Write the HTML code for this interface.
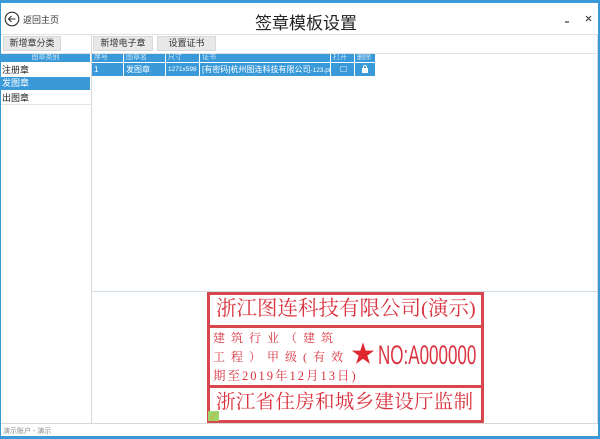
<!DOCTYPE html>
<html><head><meta charset="utf-8"><style>
*{margin:0;padding:0;box-sizing:border-box}
body{width:600px;height:439px;position:relative;background:#fff;font-family:"Liberation Sans","Noto Sans CJK SC",sans-serif;overflow:hidden;color:#222}
.a{position:absolute}
.btn{position:absolute;background:#e8e8e8;border:1px solid #d8d8d8;font-size:9px;text-align:center;line-height:13px;color:#333}
.th{position:absolute;top:54px;height:8px;background:#3a9ad9;color:#cfe6f7;font-size:7px;line-height:8px;padding-left:2px;border-right:1px solid #fff}
.td{position:absolute;top:63px;height:13px;background:#3a9ad9;color:#fff;font-size:8px;line-height:13px;padding-left:2px;border-right:1px solid #fff}
.r{color:#d9333f}
.serif{font-family:"Liberation Serif","Noto Serif CJK SC",serif}
</style></head><body>
<div class="a" style="left:0;top:0;width:600px;height:3px;background:#3a9ad9"></div>
<div class="a" style="left:0;top:0;width:1px;height:439px;background:#3a9ad9"></div>
<div class="a" style="right:0;top:0;width:2px;height:439px;background:#3a9ad9"></div>
<div class="a" style="left:0;top:436px;width:600px;height:3px;background:#3a9ad9"></div>
<svg class="a" style="left:4px;top:11px" width="16" height="16" viewBox="0 0 16 16"><circle cx="8" cy="8" r="6.8" fill="none" stroke="#333" stroke-width="1.1"/><path d="M11.5 8H4.5M7.5 5L4.5 8L7.5 11" fill="none" stroke="#333" stroke-width="1.1"/></svg>
<div class="a" style="left:23px;top:13px;font-size:9px;color:#333">返回主页</div>
<div class="a" style="left:255px;top:9px;font-size:17px;color:#222">签章模板设置</div>
<svg class="a" style="left:563px;top:14px" width="30" height="10"><path d="M2 8H6" stroke="#333" stroke-width="1.2"/><path d="M23 2L28 7M28 2L23 7" stroke="#333" stroke-width="1"/></svg>
<div class="a" style="left:1px;top:34px;width:597px;height:1px;background:#e2e2e2"></div>
<div class="a" style="left:1px;top:53px;width:597px;height:1px;background:#e2e2e2"></div>
<div class="btn" style="left:3px;top:36px;width:58px;height:15px">新增章分类</div>
<div class="btn" style="left:93px;top:36px;width:60px;height:15px">新增电子章</div>
<div class="btn" style="left:157px;top:36px;width:59px;height:15px">设置证书</div>
<div class="a" style="left:91px;top:34px;width:1px;height:390px;background:#d8d8d8"></div>
<div class="a" style="left:597px;top:34px;width:1px;height:390px;background:#d8d8d8"></div>
<div class="a" style="left:1px;top:54px;width:89px;height:8px;background:#3a9ad9;color:#cfe6f7;font-size:7px;line-height:8px;text-align:center">图章类别</div>
<div class="a" style="left:2px;top:64px;font-size:9px;line-height:12px">注册章</div>
<div class="a" style="left:1px;top:77px;width:89px;height:13px;background:#3a9ad9;color:#fff;font-size:9px;line-height:13px;padding-left:1px">发图章</div>
<div class="a" style="left:2px;top:92px;font-size:9px;line-height:12px">出图章</div>
<div class="a" style="left:1px;top:104px;width:90px;height:1px;background:#e4e4e4"></div>
<div class="th" style="left:92px;width:32px">序号</div>
<div class="th" style="left:124px;width:42px">图章名</div>
<div class="th" style="left:166px;width:34px">尺寸</div>
<div class="th" style="left:200px;width:131px">证书</div>
<div class="th" style="left:331px;width:24px">打开</div>
<div class="th" style="left:355px;width:21px">删除</div>
<div class="td" style="left:92px;width:32px">1</div>
<div class="td" style="left:124px;width:42px">发图章</div>
<div class="td" style="left:166px;width:34px;font-size:6.5px">1271x598</div>
<div class="td" style="left:200px;width:131px;font-size:8px;white-space:nowrap;overflow:hidden">[有密码]杭州图连科技有限公司<span style="font-size:6.5px">-123.pfx</span></div>
<div class="td" style="left:331px;width:24px"><span style="display:inline-block;width:7px;height:6px;border:1px solid #8fc3ea;margin:3px 0 0 7px"></span></div>
<div class="td" style="left:355px;width:21px"><svg width="8" height="8" style="margin:2px 0 0 4px"><rect x="1" y="3" width="6" height="5" fill="#fff"/><path d="M2.5 3V2a1.5 1.5 0 0 1 3 0v1" stroke="#fff" fill="none"/></svg></div>
<div class="a" style="left:92px;top:291px;width:505px;height:1px;background:#d0dde6"></div>
<div class="a" style="left:1px;top:423px;width:597px;height:1px;background:#d8d8d8"></div>
<div class="a" style="left:3px;top:426px;font-size:7px;color:#888">演示账户 - 演示</div>
<!-- stamp -->
<div class="a" style="left:207px;top:292px;width:277px;height:131px;border:3px solid #d9474e"></div>
<div class="a" style="left:207px;top:325px;width:277px;height:3px;background:#d9474e"></div>
<div class="a" style="left:207px;top:385px;width:277px;height:3px;background:#d9474e"></div>
<div class="a r serif" style="left:216px;top:295px;font-size:20.5px;line-height:28px;white-space:nowrap">浙江图连科技有限公司(演示)</div>
<div class="a r serif" style="left:213px;top:331px;font-size:12px;line-height:14px;letter-spacing:6px;white-space:nowrap">建筑行业（建筑</div>
<div class="a r serif" style="left:213px;top:350px;font-size:12px;line-height:14px;letter-spacing:6px;white-space:nowrap">工程）甲级(有效</div>
<div class="a r serif" style="left:213px;top:369px;font-size:12.5px;line-height:14px;letter-spacing:2px;white-space:nowrap">期至2019年12月13日)</div>
<div class="a r" style="left:351px;top:341px;font-size:24px;line-height:28px;color:#e0262e">★</div>
<div class="a r" style="left:378px;top:340px;font-size:27px;line-height:30px;font-family:'Liberation Sans',sans-serif;transform:scaleX(0.63);transform-origin:left;white-space:nowrap">NO:A000000</div>
<div class="a r serif" style="left:216px;top:389px;font-size:19.5px;line-height:28px;letter-spacing:0.3px;white-space:nowrap">浙江省住房和城乡建设厅监制</div>
<div class="a" style="left:208px;top:411px;width:11px;height:10px;background:#9ed36a;color:#e8a030;font-size:9px;line-height:10px;text-align:center">✓</div>
</body></html>
